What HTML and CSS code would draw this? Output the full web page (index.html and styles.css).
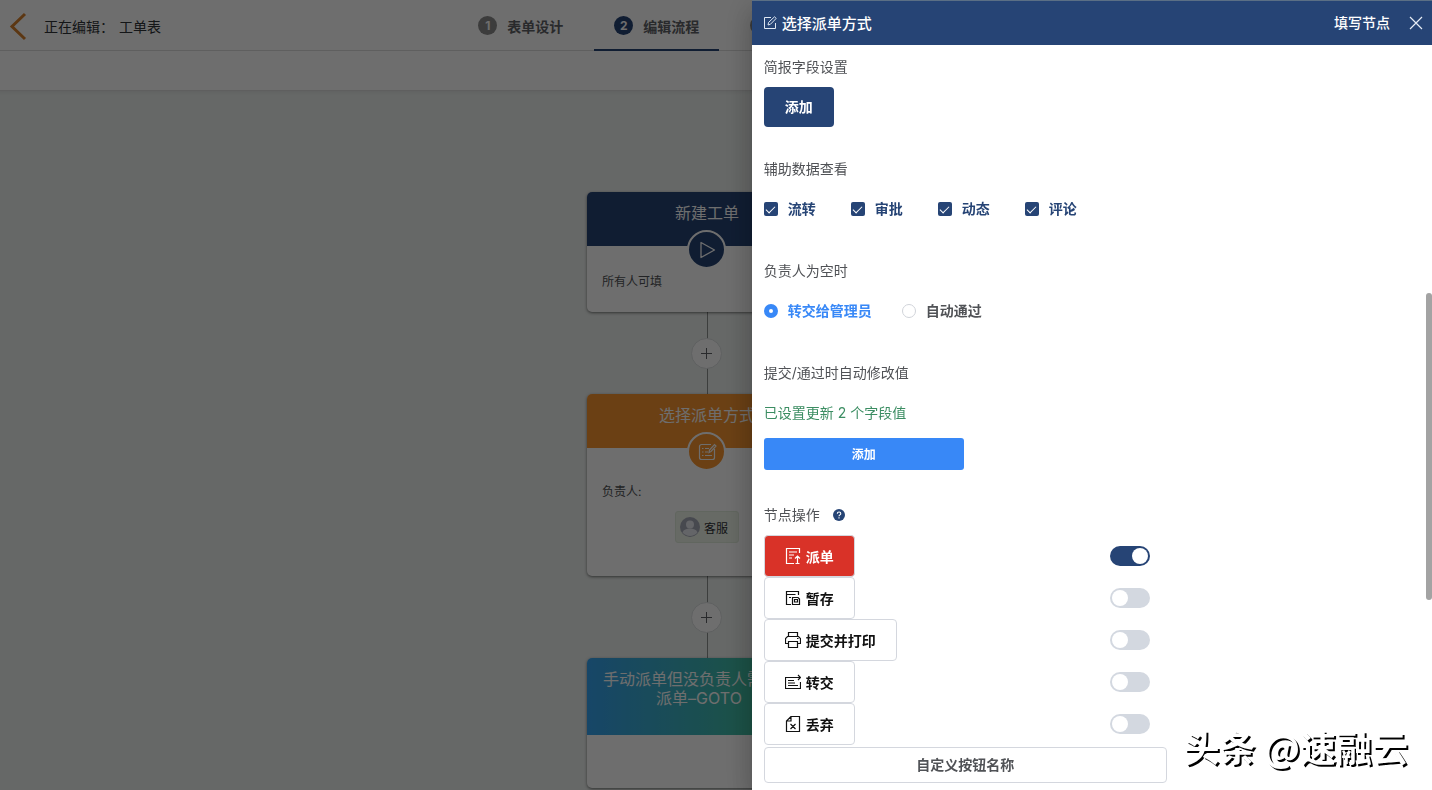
FILE: index.html
```
<!DOCTYPE html>
<html lang="zh-CN">
<head>
  <meta charset="UTF-8">
  <meta name="viewport" content="width=device-width, initial-scale=1.0">
  <title>编辑流程</title>
  <link rel="stylesheet" href="styles.css">
</head>
<body>
<div class="page">
  <header class="topbar">
    <div class="topbar-left">
      <a href="#" class="back" aria-label="返回">
        <svg width="20" height="32" viewBox="0 0 20 32"><path d="M17 4L4 16.500l13 12.500" fill="none" stroke="#d6812c" stroke-width="3"/></svg>
      </a>
      <span>正在编辑：</span>
      <span class="form-name">工单表</span>
    </div>
    <nav class="steps">
      <a href="#" class="step"><i>1</i>表单设计</a>
      <a href="#" class="step active"><i>2</i>编辑流程</a>
      <a href="#" class="step"><i>3</i></a>
    </nav>
  </header>
  <div class="toolbar"></div>

  <main class="canvas">
    <section class="node node-start">
      <h3>新建工单</h3>
      <div class="node-icon">
        <svg width="20" height="20" viewBox="0 0 20 20"><path d="M4 2.500v15L17.500 10z" fill="none" stroke="#fff" stroke-width="1.300" stroke-linejoin="round"/></svg>
      </div>
      <p>所有人可填</p>
    </section>
    <div class="link"><button aria-label="添加节点"></button></div>
    <section class="node node-fill">
      <h3>选择派单方式</h3>
      <div class="node-icon">
        <svg width="20" height="20" viewBox="0 0 20 20" fill="none" stroke="#fff" stroke-width="1.200"><path d="M14 2.500H4.500a2 2 0 0 0-2 2v11a2 2 0 0 0 2 2h11a2 2 0 0 0 2-2V7M5 6.500h1.500M5 10h1.500M5 13.500h1.500M8 6.500h4M8 10h3M8 13.500h7M12 10.500l.5-2.500 5-5.500 1.500 1.500-5 5.500z"/></svg>
      </div>
      <p>负责人:</p>
      <div class="person">
        <svg width="20" height="20" viewBox="0 0 20 20"><circle cx="10" cy="10" r="10" fill="#a5a9b8"/><circle cx="10" cy="7.500" r="4" fill="#e8eaf0"/><path d="M2.500 15.500c1-3 4-4 7.500-4s6.500 1 7.500 4a10 10 0 0 1-15 0z" fill="#e8eaf0"/></svg>
        客服
      </div>
    </section>
    <div class="link"><button aria-label="添加节点"></button></div>
    <section class="node node-goto">
      <h3>手动派单但没负责人需要再派单–GOTO</h3>
    </section>
  </main>
</div>

<div class="mask"></div>

<aside class="drawer">
  <header class="drawer-head">
    <svg width="14" height="14" viewBox="0 0 14 14" fill="none" stroke="#dfe7f3" stroke-width="1"><path d="M8 1.500H1.500v11h11V7M5 9l.6-2.600L11.500.8l1.700 1.600-5.800 5.900z"/></svg>
    <h2>选择派单方式</h2>
    <span class="node-type">填写节点</span>
    <button class="close" aria-label="关闭">
      <svg width="14" height="14" viewBox="0 0 14 14"><path d="M1 1l12 12M13 1L1 13" stroke="#e6ecf5" stroke-width="1.200"/></svg>
    </button>
  </header>

  <div class="drawer-body">
    <div class="item">
      <h4>简报字段设置</h4>
      <button class="btn-primary">添加</button>
    </div>

    <div class="item">
      <h4>辅助数据查看</h4>
      <div class="options checks">
        <label><input type="checkbox" checked><span>流转</span></label>
        <label><input type="checkbox" checked><span>审批</span></label>
        <label><input type="checkbox" checked><span>动态</span></label>
        <label><input type="checkbox" checked><span>评论</span></label>
      </div>
    </div>

    <div class="item">
      <h4>负责人为空时</h4>
      <div class="options radios">
        <label><input type="radio" name="empty" checked><span>转交给管理员</span></label>
        <label><input type="radio" name="empty"><span>自动通过</span></label>
      </div>
    </div>

    <div class="item">
      <h4>提交/通过时自动修改值</h4>
      <p class="done">已设置更新 2 个字段值</p>
      <div class="btn-line"><button class="btn-blue">添加</button></div>
    </div>

    <div class="item">
      <h4>节点操作 <svg class="help" width="12" height="12" viewBox="0 0 12 12"><circle cx="6" cy="6" r="6" fill="#264475"/><path d="M4.300 4.700c0-2.200 3.500-2.200 3.500 0C7.800 5.900 6 5.900 6 7.200M6 8.300v1.200" fill="none" stroke="#fff" stroke-width="1.100"/></svg></h4>
      <div class="actions">
        <div class="action">
          <button class="btn danger">
            <svg width="16" height="16" viewBox="0 0 16 16"><path d="M14.500 5V.5h-13v15H9M4 4h8M4 7h5M4 10h3M12.500 15.500V8M10 10.500L12.500 8l2.500 2.500M10.500 15.500h4"/></svg>派单
          </button>
          <input type="checkbox" class="switch" aria-label="派单" checked>
        </div>
        <div class="action">
          <button class="btn">
            <svg width="16" height="16" viewBox="0 0 16 16"><path d="M13.500 5V1.500h-12v13H6M1.500 4.500h9M4 7.500h2M7.500 14.500v-7h5.500l1.500 1.500v5.500zM9.500 12h3V9.500h-3z"/></svg>暂存
          </button>
          <input type="checkbox" class="switch" aria-label="暂存">
        </div>
        <div class="action">
          <button class="btn">
            <svg width="16" height="16" viewBox="0 0 16 16"><path d="M3.500 4.500v-4h9v4M3.500 11.500h-3v-5l2-2h11l2 2v5h-3M3.500 9.500h9v6h-9zM12 6.500h1.500"/></svg>提交并打印
          </button>
          <input type="checkbox" class="switch" aria-label="提交并打印">
        </div>
        <div class="action">
          <button class="btn">
            <svg width="16" height="16" viewBox="0 0 16 16"><path d="M11 3.500H.5v11h15V8M3 6.500h6M3 9h7M3 11.500h10M11 3.500h4.500M13 1l2.500 2.500L13 6"/></svg>转交
          </button>
          <input type="checkbox" class="switch" aria-label="转交">
        </div>
        <div class="action">
          <button class="btn">
            <svg width="16" height="16" viewBox="0 0 16 16"><path d="M6 .5h8.500v15h-13V5zM6 .5V5H1.500M5.500 8l5 5M10.500 8l-5 5"/></svg>丢弃
          </button>
          <input type="checkbox" class="switch" aria-label="丢弃">
        </div>
        <button class="btn-custom">自定义按钮名称</button>
      </div>
    </div>
  </div>
  <div class="scroll-thumb"></div>
</aside>

<div class="watermark">头条 @速融云</div>
</body>
</html>
```
FILE: styles.css
```
* {
  box-sizing: border-box;
}
body {
  margin: 0;
  height: 100vh;
  overflow: hidden;
  font-family: Inter, "Noto Sans CJK SC", sans-serif;
  font-size: 14px;
  color: #505256;
}
h2, h3, h4, p {
  margin: 0;
  font-weight: normal;
}
button {
  font-family: inherit;
  padding: 0;
  cursor: pointer;
}
a {
  color: inherit;
  text-decoration: none;
}

/* editor page */
.page {
  height: 100vh;
  display: flex;
  flex-direction: column;
  background: #fff;
}
.topbar {
  display: grid;
  grid-template-columns: 32% 1fr;
  height: 51px;
  border-bottom: 1px solid #dcdcdc;
}
.topbar-left {
  display: flex;
  align-items: center;
  padding-left: 8px;
  color: #303338;
}
.back {
  display: flex;
  margin-right: 16px;
}
.form-name {
  margin-left: 5px;
}
.steps {
  display: flex;
  gap: 11px;
}
.step {
  display: flex;
  align-items: center;
  height: 51px;
  padding: 2px 20px 0;
  border-bottom: 2px solid transparent;
  font-weight: bold;
  color: #606266;
}
.step i {
  width: 19px;
  height: 19px;
  margin-right: 10px;
  border-radius: 50%;
  background: #8c8c8c;
  color: #fff;
  font-size: 12px;
  font-style: normal;
  line-height: 19px;
  text-align: center;
}
.step.active {
  border-color: #264475;
}
.step.active i {
  background: #264475;
}
.toolbar {
  height: 40px;
  border-bottom: 1px solid #dcdcdc;
}
.canvas {
  flex: 1;
  min-height: 0;
  display: flex;
  flex-direction: column;
  align-items: center;
  padding: 101px 18px 0 0;
  background: linear-gradient(#e2e5e4, #ecf0ee 4px);
}

/* flow nodes */
.node {
  flex: none;
  position: relative;
  width: 240px;
  height: 120px;
  border-radius: 5px;
  background: #fff;
  box-shadow: 0 1px 3px rgba(0, 0, 0, .5);
}
.node h3 {
  height: 54px;
  padding: 12px 16px 0;
  border-radius: 5px 5px 0 0;
  background: #264475;
  color: #fff;
  font-size: 16px;
  line-height: 19px;
  text-align: center;
}
.node p {
  padding: 26px 15px 0;
  font-size: 12px;
  line-height: 20px;
}
.node-icon {
  position: absolute;
  top: 38px;
  left: 100px;
  display: flex;
  align-items: center;
  justify-content: center;
  width: 39px;
  height: 39px;
  border: 2px solid #fff;
  border-radius: 50%;
  background: #264475;
}
.node-fill {
  height: 182px;
}
.node-fill p {
  padding-top: 34px;
}
.node-fill h3,
.node-fill .node-icon {
  background: #f79530;
}
.node-goto {
  height: 130px;
}
.node-goto h3 {
  height: 77px;
  padding-right: 32px;
  background: linear-gradient(90deg, #36a3f0, #42c0a0 70%, #42c090);
}
.person {
  display: flex;
  align-items: center;
  gap: 4px;
  width: 64px;
  height: 32px;
  margin: 9px auto 0;
  padding-left: 4px;
  border: 1px solid #e1ecdc;
  border-radius: 3px;
  background: #eff5e9;
  color: #303338;
  font-size: 12px;
}
.link {
  flex: none;
  display: flex;
  align-items: center;
  width: 32px;
  height: 82px;
  background: linear-gradient(#8c8f8e, #8c8f8e) center / 1px 100% no-repeat;
}
.link button {
  width: 31px;
  height: 31px;
  border: 1px solid #dcdfe0;
  border-radius: 50%;
  background:
    linear-gradient(#606266, #606266) center / 11px 1px no-repeat,
    linear-gradient(#606266, #606266) center / 1px 11px no-repeat,
    #fff;
}

.mask {
  position: fixed;
  inset: 0;
  background: rgba(0, 0, 0, .57);
}

/* drawer */
.drawer {
  position: fixed;
  top: 0;
  right: 0;
  bottom: 0;
  width: 47.5%;
  overflow: hidden;
  background: #fff;
  border-top: 1px solid #5b6f85;
  box-shadow: 0 8px 10px -5px rgba(0, 0, 0, .2), 0 16px 24px 2px rgba(0, 0, 0, .14), 0 6px 30px 5px rgba(0, 0, 0, .12);
}
.drawer-head {
  display: flex;
  align-items: center;
  height: 44px;
  padding: 0 9px 0 11px;
  background: #264475;
  color: #fff;
}
.drawer-head h2 {
  margin-left: 5px;
  padding-bottom: 2px;
  font-size: 15px;
  font-weight: 500;
}
.node-type {
  margin-left: auto;
  padding-bottom: 2px;
  font-weight: 500;
}
.close {
  display: flex;
  margin-left: 19px;
  border: 0;
  background: none;
}
.drawer-body {
  padding: 2px 12px 0;
}
.item {
  margin-bottom: 22px;
}
.item h4 {
  font-size: 14px;
  line-height: 40px;
}
.btn-primary {
  display: block;
  width: 70px;
  height: 40px;
  padding-bottom: 2px;
  border: 0;
  border-radius: 4px;
  background: #264475;
  color: #fff;
  font-size: 14px;
  font-weight: bold;
}
.options {
  display: flex;
  height: 40px;
  font-weight: bold;
}
.options label {
  display: flex;
  align-items: center;
  gap: 10px;
}
.options span {
  padding-bottom: 2px;
}
.options input {
  appearance: none;
  width: 14px;
  height: 14px;
  margin: 0;
}
.checks {
  gap: 35px;
  color: #264475;
}
.checks input {
  display: flex;
  justify-content: center;
  padding-top: 2px;
  border-radius: 2px;
  background: #264475;
}
.checks input::after {
  content: "";
  width: 4px;
  height: 8px;
  border: solid #fff;
  border-width: 0 1px 1px 0;
  transform: rotate(45deg);
}
.radios {
  gap: 30px;
}
.radios input {
  border: 1px solid #d0d3d9;
  border-radius: 50%;
}
.radios input:checked {
  border: 5px solid #3888f7;
}
.radios input:checked + span {
  color: #3888f7;
}
.done {
  line-height: 40px;
  color: #3b8d62;
}
.btn-line {
  height: 40px;
  padding-top: 5px;
}
.btn-blue {
  display: block;
  width: 200px;
  height: 32px;
  padding-bottom: 2px;
  border: 0;
  border-radius: 3px;
  background: #3888f7;
  color: #fff;
  font-size: 12px;
  font-weight: bold;
}
.help {
  margin-left: 9px;
  vertical-align: -1px;
}
.actions {
  max-width: 403px;
}
.action {
  display: flex;
  align-items: center;
  justify-content: space-between;
  padding-right: 17px;
}
.btn {
  display: flex;
  align-items: center;
  gap: 5px;
  height: 42px;
  padding: 0 20px;
  border: 1px solid #d4d7de;
  border-radius: 4px;
  background: #fff;
  color: #111;
  font-size: 14px;
  font-weight: bold;
}
.btn svg {
  fill: none;
  stroke: currentColor;
  stroke-width: 1.2;
}
.btn.danger {
  background: #d93228;
  color: #fff;
}
.switch {
  appearance: none;
  display: flex;
  width: 40px;
  height: 20px;
  margin: 0;
  padding: 2px;
  border-radius: 10px;
  background: #d3d8e0;
}
.switch::after {
  content: "";
  width: 16px;
  height: 16px;
  border-radius: 50%;
  background: #fff;
}
.switch:checked {
  justify-content: flex-end;
  background: #264475;
}
.btn-custom {
  width: 100%;
  height: 36px;
  margin-top: 2px;
  padding-bottom: 2px;
  border: 1px solid #d4d7de;
  border-radius: 4px;
  background: #fff;
  color: #505256;
  font-size: 14px;
  font-weight: bold;
}
.scroll-thumb {
  position: absolute;
  top: 292px;
  right: 0;
  width: 6px;
  height: 307px;
  border-radius: 3px;
  background: #a3a3a3;
}

.watermark {
  position: fixed;
  right: 24px;
  bottom: 18px;
  color: #fff;
  font-family: "Noto Sans CJK SC", sans-serif;
  font-size: 36px;
  font-weight: bold;
  line-height: 52px;
  text-shadow: 2px 2px 0 #000;
}
```
